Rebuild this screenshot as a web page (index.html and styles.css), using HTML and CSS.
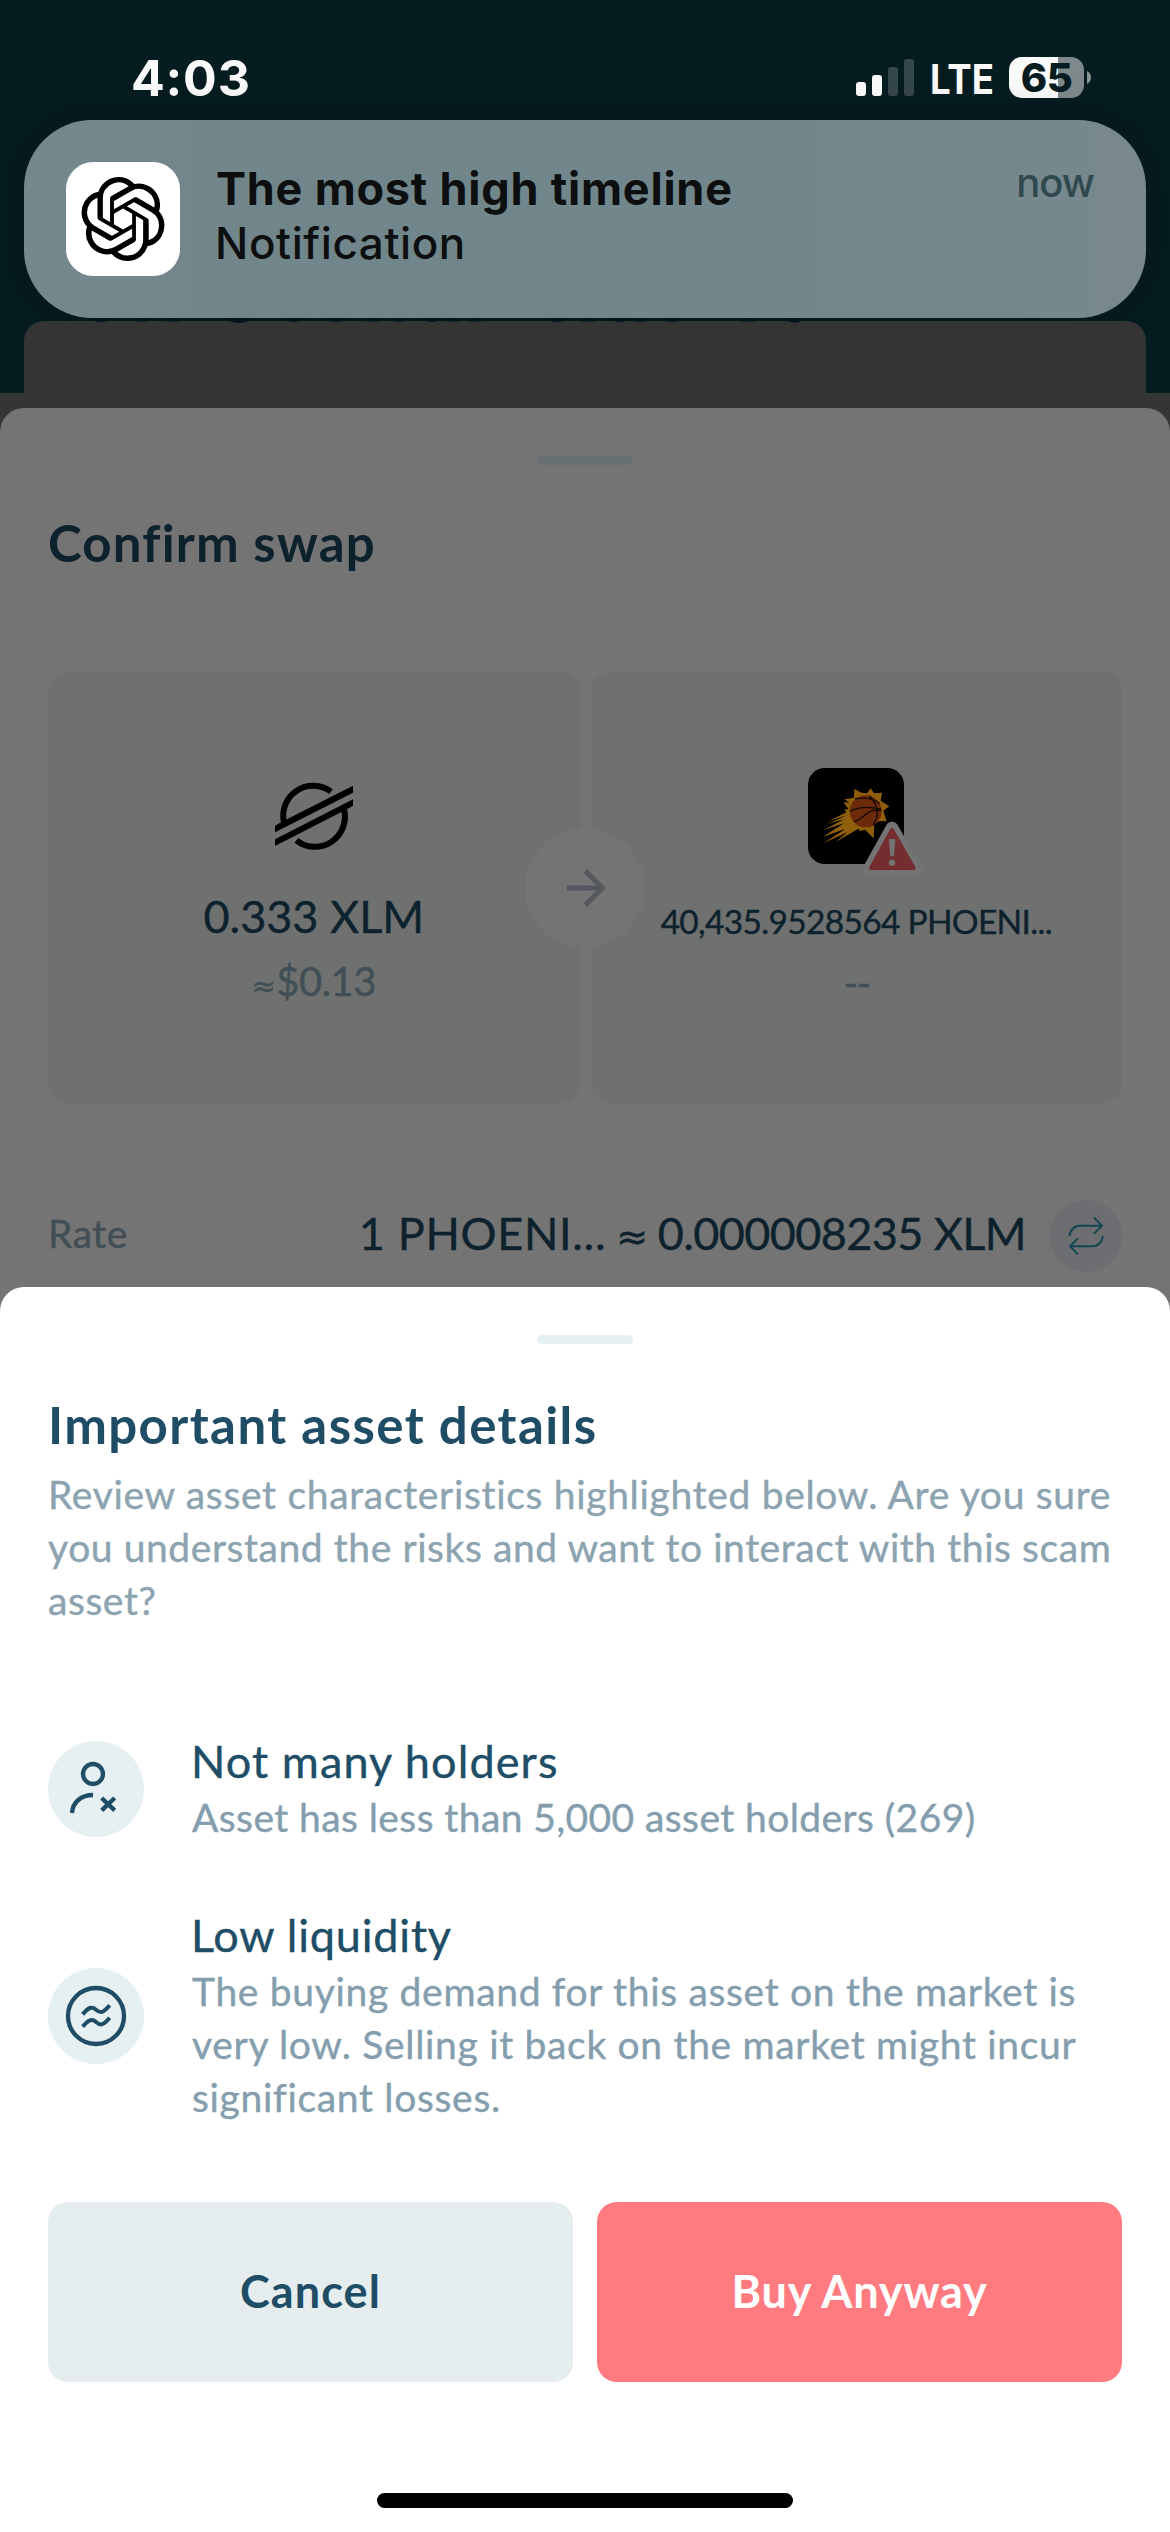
FILE: index.html
```html
<!DOCTYPE html>
<html lang="en">
<head>
<meta charset="utf-8">
<title>Confirm swap</title>
<link rel="stylesheet" href="styles.css">
</head>
<body>
<div class="screen">
  <header class="status">
    <span class="time">4:03</span>
    <div class="status-icons">
      <svg class="signal" viewBox="0 0 58 37">
        <g fill="#fafafa"><rect x="0" y="23" width="10" height="14" rx="3"/><rect x="16" y="16" width="10" height="21" rx="3"/></g>
        <g fill="#36474b"><rect x="32" y="8" width="10" height="29" rx="3"/><rect x="48" y="0" width="10" height="37" rx="3"/></g>
      </svg>
      <svg class="network" viewBox="0 0 62 37"><text x="-1" y="35" textLength="64" lengthAdjust="spacingAndGlyphs">LTE</text></svg>
      <div class="battery-wrap">
        <span class="battery">65</span>
        <svg class="nub" viewBox="0 0 4 13"><path d="M0 0 C5.3 2.5 5.3 10.500 0 13Z" fill="#8a9495"/></svg>
      </div>
    </div>
  </header>

  <section class="notification">
    <div class="app-icon">
      <svg viewBox="0 0 24 24"><path d="M22.2819 9.8211a5.9847 5.9847 0 0 0-.5157-4.9108 6.0462 6.0462 0 0 0-6.5098-2.9A6.0651 6.0651 0 0 0 4.9807 4.1818a5.9847 5.9847 0 0 0-3.9977 2.9 6.0462 6.0462 0 0 0 .7427 7.0966 5.98 5.98 0 0 0 .511 4.9107 6.051 6.051 0 0 0 6.5146 2.9001A5.9847 5.9847 0 0 0 13.2599 24a6.0557 6.0557 0 0 0 5.7718-4.2058 5.9894 5.9894 0 0 0 3.9977-2.9001 6.0557 6.0557 0 0 0-.7475-7.0729zm-9.022 12.6081a4.4755 4.4755 0 0 1-2.8764-1.0408l.1419-.0804 4.7783-2.7582a.7948.7948 0 0 0 .3927-.6813v-6.7369l2.02 1.1686a.071.071 0 0 1 .038.052v5.5826a4.504 4.504 0 0 1-4.4945 4.4944zm-9.6607-4.1254a4.4708 4.4708 0 0 1-.5346-3.0137l.142.0852 4.783 2.7582a.7712.7712 0 0 0 .7806 0l5.8428-3.3685v2.3324a.0804.0804 0 0 1-.0332.0615L9.74 19.9502a4.4992 4.4992 0 0 1-6.1408-1.6464zM2.3408 7.8956a4.485 4.485 0 0 1 2.3655-1.9728V11.6a.7664.7664 0 0 0 .3879.6765l5.8144 3.3543-2.0201 1.1685a.0757.0757 0 0 1-.071 0l-4.8303-2.7865A4.504 4.504 0 0 1 2.3408 7.872zm16.5963 3.8558L13.1038 8.364 15.1192 7.2a.0757.0757 0 0 1 .071 0l4.8303 2.7913a4.4944 4.4944 0 0 1-.6765 8.1042v-5.6772a.79.79 0 0 0-.407-.667zm2.0107-3.0231l-.142-.0852-4.7735-2.7818a.7759.7759 0 0 0-.7854 0L9.409 9.2297V6.8974a.0662.0662 0 0 1 .0284-.0615l4.8303-2.7866a4.4992 4.4992 0 0 1 6.6802 4.66zM8.3065 12.863l-2.02-1.1638a.0804.0804 0 0 1-.038-.0567V6.0742a4.4992 4.4992 0 0 1 7.3757-3.4537l-.142.0805L8.704 5.459a.7948.7948 0 0 0-.3927.6813zm1.0976-2.3654l2.602-1.4998 2.6069 1.4998v2.9994l-2.5974 1.4997-2.6067-1.4997Z"/></svg>
    </div>
    <div class="note-text">
      <div class="note-title">The most high timeline</div>
      <div class="note-body">Notification</div>
    </div>
    <span class="note-time">now</span>
  </section>

  <!-- top edge of the page card, with the tail of its covered heading -->
  <div class="peek">
    <svg class="covered" viewBox="0 318 1170 6">
      <g fill="#03141a">
        <path d="M89 318h24q-12 8-24 0zM224 318h30q-15 10-30 0zM283 318h22q-11 8-22 0zM323 318h24q-12 8-24 0zM421 318h22q-11 8-22 0zM545 318h24q-12 8-24 0zM609 318h22q-11 8-22 0zM659 318h24q-12 8-24 0zM787 318h14q2 3-4 4.500q-8 1-12-4.500z"/>
        <path d="M136 318h12v3.500h-12zM167 318h12v3.500h-12zM367 318h13v3.500h-13zM394 318h11v3.500h-11zM447 318h11v3.500h-11zM469 318h12v3.500h-12zM582 318h12v3.500h-12zM634 318h12v3.500h-12zM742 318h13v3.500h-13z"/>
      </g>
    </svg>
  </div>

  <section class="sheet confirm">
    <div class="handle"></div>
    <h2 class="title">Confirm swap</h2>
    <div class="cards">
      <div class="card">
        <div class="token">
          <svg class="stellar" viewBox="18 0 288 276">
            <g fill="none" stroke="#000" stroke-width="18"><path d="M72 158 A90 90 0 0 1 213 65"/><path d="M252 118 A90 90 0 0 1 109 211"/></g>
            <path d="M45 167 60 158 279 47V68L45 187ZM45 208 279 88V107L262 117 45 228Z"/>
          </svg>
        </div>
        <div class="amount">0.333 XLM</div>
        <div class="fiat"><span class="approx-small">≈</span>$0.13</div>
      </div>
      <div class="card">
        <div class="token">
          <svg class="phoenix" viewBox="87 54 288 288">
            <rect x="87" y="54" width="288" height="288" rx="50"/>
            <path fill="#8f5f0b" d="M226 117 247 128 265 130 275 115 285 130 309 128 305 152 331 169 313 182 323 214 302 213 286 222 284 265 258 239 243 243 238 236 170 276 205 247 133 280 200 236 131 261 195 220 134 240 195 208 144 222 204 196 150 213 202 187 196 178 209 178 193 156 211 158 196 148 225 143Z"/>
            <circle cx="260" cy="184" r="48" fill="#6c2a0b"/>
            <g fill="none" stroke="#140a06" stroke-width="4"><path d="M228 147Q270 138 302 160M213 184Q248 164 307 178M225 215C257 207 261 174 306 181M271 137Q312 179 282 226"/></g>
            <path d="M339 234 270 358H410Z" fill="#747474" stroke="#747474" stroke-width="38" stroke-linejoin="round"/>
            <path d="M339 240 276 354H404Z" fill="#752e30" stroke="#752e30" stroke-width="12" stroke-linejoin="round"/>
            <path d="M330 267H349L345 319H334Z" fill="#747474"/><circle cx="339" cy="338" r="9.500" fill="#747474"/>
          </svg>
        </div>
        <div class="amount amount-small">40,435.9528564 PHOENI...</div>
        <div class="fiat fiat-empty">--</div>
      </div>
      <div class="direction">
        <svg viewBox="0 0 120 120"><path d="M42 60H77M60.500 43 77.500 60 60.500 77" fill="none" stroke="#55585f" stroke-width="5"/></svg>
      </div>
    </div>
    <div class="rate">
      <span class="rate-label">Rate</span>
      <div class="rate-value"><span>1 PHOENI...</span><span class="approx">≈</span><span class="rate-number">0.000008235 XLM</span></div>
      <div class="flip">
        <svg viewBox="60 30 216 216"><path d="M119 138A31 31 0 0 1 150 107H216M192 83 216 107 192 131M218 138A31 31 0 0 1 187 169H120M144 145 120 169 144 193" fill="none" stroke="#0f4650" stroke-width="6"/></svg>
      </div>
    </div>
  </section>

  <section class="sheet details">
    <div class="handle"></div>
    <h2 class="title title-details">Important asset details</h2>
    <p class="intro"><span class="wide">Review asset characteristics highlighted below. Are you sure</span><br>you understand the risks and want to interact with this scam<br>asset?</p>
    <div class="items">
      <div class="item">
        <svg class="badge" viewBox="24 66 288 288">
          <circle cx="168" cy="210" r="144" fill="#e6eff1"/>
          <g fill="none" stroke="#204d66" stroke-width="13"><circle cx="159" cy="165" r="30"/><path d="M96 282C98 250 123 228 159 228"/><path d="M185 237 224 274M224 237 185 274" stroke-width="13"/></g>
        </svg>
        <div>
          <div class="item-title">Not many holders</div>
          <div class="item-text item-text-holders">Asset has less than 5,000 asset holders (269)</div>
        </div>
      </div>
      <div class="item">
        <svg class="badge" viewBox="24 747 288 288">
          <circle cx="168" cy="891" r="144" fill="#e6eff1"/>
          <g fill="none" stroke="#204d66" stroke-width="13"><circle cx="168" cy="891" r="84"/><path d="M128 886C146 865 155 861 168 872C182 884 190 882 209 859M128 923C146 902 155 898 168 909C182 921 190 919 209 896" stroke-width="12"/></g>
        </svg>
        <div>
          <div class="item-title item-title-low">Low liquidity</div>
          <div class="item-text">The buying demand for this asset on the market is<br>very low. Selling it back on the market might incur<br>significant losses.</div>
        </div>
      </div>
    </div>
    <div class="actions">
      <button class="btn cancel">Cancel</button>
      <button class="btn buy">Buy Anyway</button>
    </div>
    <div class="home-bar"></div>
  </section>
</div>
</body>
</html>
```

FILE: styles.css
```css
* { box-sizing: border-box; }
body { margin: 0; }
svg { display: block; }

.screen {
  width: 1170px;
  height: 2532px;
  overflow: hidden;
  background: linear-gradient(#051c20 393px, #333635 393px);
  font-family: Lato, "Noto Sans", sans-serif;
  display: flex;
  flex-direction: column;
}

/* status bar */
.status {
  height: 120px;
  padding: 0 79px 0 131px;
  display: flex;
  justify-content: space-between;
  align-items: flex-start;
  font-family: Inter, sans-serif;
}
.time {
  padding-top: 48px;
  font-size: 50px;
  line-height: 60px;
  font-weight: 700;
  letter-spacing: 0.8px;
  color: #fafafa;
}
.status-icons { display: flex; align-items: center; padding-top: 57px; }
.signal { width: 58px; height: 37px; }
.network {
  width: 62px;
  height: 37px;
  margin-left: 17px;
  overflow: visible;
  font-size: 41px;
  font-weight: 700;
  fill: #fafafa;
}
.battery-wrap { display: flex; align-items: center; gap: 3px; margin-left: 16px; }
.battery {
  width: 75px;
  height: 41px;
  border-radius: 13px;
  background: linear-gradient(90deg, #fafafa 65%, #7f898b 65%);
  color: #051c20;
  font-size: 40px;
  line-height: 41px;
  font-weight: 800;
  letter-spacing: -0.4px;
  text-align: center;
}
.nub { width: 4px; height: 13px; }

/* notification banner */
.notification {
  height: 198px;
  margin: 0 24px;
  padding: 42px 54px 0 42px;
  border-radius: 68px;
  background: linear-gradient(90deg, #75888d, #71868a 25%, #71878b 65%, #78888e);
  box-shadow: 0 0 40px rgba(0, 10, 14, 0.25);
  display: flex;
  align-items: flex-start;
  font-family: Inter, sans-serif;
  position: relative;
}
.app-icon {
  width: 114px;
  height: 114px;
  border-radius: 27px;
  background: #fff;
  display: flex;
  align-items: center;
  justify-content: center;
}
.app-icon svg { width: 84px; height: 84px; }
.note-text { flex: 1; padding: 1px 0 0 36px; color: #0c0e0f; white-space: nowrap; }
.note-title { font-size: 45px; line-height: 52px; font-weight: 700; letter-spacing: 0.78px; }
.note-body {
  margin: 2px 0 0 -1px;
  font-size: 44px;
  line-height: 52px;
  font-weight: 500;
  letter-spacing: 0.6px;
}
.note-time {
  margin: -3px -2px 0 0;
  font-size: 40px;
  line-height: 48px;
  font-weight: 500;
  letter-spacing: -1px;
  color: #2f494e;
}

.peek {
  position: relative;
  height: 117px;
  margin: 3px 24px 0;
  border-radius: 20px 20px 0 0;
  background: #343434;
}
.covered { position: absolute; left: -24px; top: -3px; width: 1170px; height: 6px; }

/* bottom sheets */
.sheet { position: relative; padding: 48px 48px 0; border-radius: 24px 24px 0 0; flex: none; }
.confirm { margin-top: -30px; height: 929px; background: #747474; }
.details { margin-top: -50px; height: 1245px; background: #fff; }
.handle { width: 96px; height: 9px; margin: 0 auto; border-radius: 5px; background: #e6eff1; }
.confirm .handle { background: #687072; }
.title {
  margin: 48px 0 0;
  font-size: 51px;
  line-height: 60px;
  font-weight: 700;
  letter-spacing: 1.15px;
  color: #0e222e;
}
.title-details { margin-top: 51px; letter-spacing: 1.4px; color: #204d66; }

.cards {
  position: relative;
  margin-top: 99px;
  height: 431px;
  display: grid;
  grid-template-columns: 1fr 1fr;
  gap: 11px;
}
.card {
  padding-top: 96px;
  border-radius: 20px;
  background: #6e716f;
  text-align: center;
  white-space: nowrap;
}
.token { height: 96px; display: flex; justify-content: center; align-items: center; }
.stellar { width: 96px; height: 92px; }
.phoenix { width: 96px; height: 96px; overflow: visible; }
.amount { margin-top: 25px; font-size: 45px; line-height: 54px; color: #0e222e; }
.amount-small { font-size: 33.5px; line-height: 64px; letter-spacing: -0.69px; }
.fiat { margin-top: 14px; font-size: 40px; line-height: 48px; letter-spacing: -0.5px; color: #414e55; }
.approx-small { margin-right: 1px; font: 29px/1 "DejaVu Sans", sans-serif; }
.fiat-empty { margin-top: 6px; letter-spacing: -2px; }
.amount, .fiat, .rate-label, .rate-value { -webkit-text-stroke: 0.4px; }
.direction {
  position: absolute;
  left: 477px;
  top: 156px;
  width: 120px;
  height: 120px;
  border-radius: 50%;
  background: #747474;
}

.rate { margin-top: 97px; display: flex; align-items: flex-start; line-height: 67px; }
.rate-label { font-size: 39px; letter-spacing: 0.5px; color: #414e55; }
.rate-value {
  margin-left: auto;
  display: flex;
  align-items: baseline;
  font-size: 45px;
  letter-spacing: 0.7px;
  color: #0e222e;
}
.approx { margin: 0 9px 0 10px; font: 38px/1 "DejaVu Sans", sans-serif; }
.rate-number { letter-spacing: -0.6px; }
.flip { width: 72px; height: 72px; margin-left: 24px; border-radius: 50%; background: #6c6e71; }

.intro {
  margin: 13px 0 0;
  font-size: 39px;
  line-height: 53px;
  letter-spacing: 0.57px;
  color: #8ca3b0;
  white-space: nowrap;
}
.wide { letter-spacing: 0.68px; }
.intro, .item-title, .item-text { -webkit-text-stroke: 0.4px; }
.items { margin-top: 106px; display: flex; flex-direction: column; gap: 60px; }
.item { display: flex; align-items: center; gap: 48px; padding-bottom: 3px; margin: 0; white-space: nowrap; }
.item > div { margin-bottom: -3px; padding-bottom: 3px; }
.badge { width: 96px; height: 96px; }
.item-title {
  font-size: 45px;
  line-height: 56px;
  letter-spacing: 1.1px;
  text-indent: -1px;
  color: #204d66;
}
.item-title-low { letter-spacing: 0.8px; }
.item-text { margin-top: 2px; font-size: 39px; line-height: 53px; letter-spacing: 0.68px; color: #849eae; }
.item-text-holders { letter-spacing: 0.41px; }

.actions { margin-top: 75px; display: grid; grid-template-columns: 1fr 1fr; gap: 24px; }
.btn {
  height: 180px;
  padding: 0 0 2px;
  border: 0;
  border-radius: 20px;
  font-family: inherit;
  font-size: 45px;
  font-weight: 700;
}
.cancel { background: #e5edee; color: #204d66; letter-spacing: 1.1px; }
.buy { background: #ff7b80; color: #fff; letter-spacing: 0.8px; }
.home-bar { width: 416px; height: 15px; margin: 111px auto 0; border-radius: 8px; background: #000; }
```
